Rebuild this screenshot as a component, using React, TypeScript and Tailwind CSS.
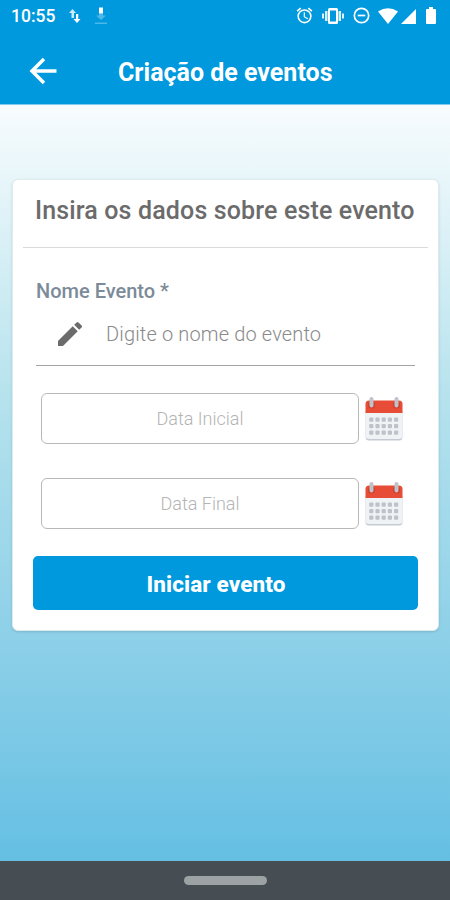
import React, { useState } from 'react';

const StatusBar: React.FC = () => (
    <div className="h-8 pl-[11px] pr-[14px] flex items-center justify-between text-white">
        <div className="flex items-center">
            <span className="w-[58px] text-[17.5px] font-medium leading-8">10:55</span>
            <svg className="w-3 h-4 mr-[14px]" viewBox="0 0 12 16" fill="currentColor">
                <path d="M3.500 1L7 5H5v5H2.500V5H0z" opacity="0.8" />
                <path d="M8 15l3.500-4H9.200V6H7v5H4.500z" />
            </svg>
            <svg className="w-3 h-[18px]" viewBox="0 0 12 18" fill="currentColor">
                <path d="M4 0.500h4v6H4z" />
                <path d="M4 6.500h4v2h3l-5 4.500-5-4.500h3z" opacity="0.3" />
                <path d="M0 15.500h12V17H0z" opacity="0.3" />
            </svg>
        </div>
        <div className="flex items-center">
            <svg className="size-[19px] mr-[8px] -mt-px" viewBox="0 0 24 24" fill="currentColor">
                <path d="M22 5.720l-4.600-3.860-1.290 1.530 4.600 3.860L22 5.720zM7.880 3.390L6.600 1.860 2 5.710l1.290 1.530 4.590-3.850zM12.500 8H11v6l4.750 2.850.75-1.230-4-2.370V8zM12 4a9 9 0 1 0 0 18 9 9 0 0 0 0-18zm0 16a7 7 0 1 1 0-14 7 7 0 0 1 0 14z" />
            </svg>
            <svg className="w-[22px] h-4 mr-[9px]" viewBox="0 0 22 16" fill="currentColor">
                <path d="M0 5.500h2v5H0zM3 3h2.500v10H3zM20 5.500h2v5h-2zM16.500 3H19v10h-2.500z" opacity="0.85" />
                <path d="M7.500 0h7Q16 0 16 1.500v13q0 1.500-1.500 1.500h-7Q6 16 6 14.500v-13Q6 0 7.500 0zM8 2.500v11h6v-11z" fillRule="evenodd" />
            </svg>
            <svg className="size-[17px] mr-[8px] -mt-px" viewBox="0 0 18 18" fill="none" stroke="currentColor" strokeWidth="1.800">
                <circle cx="9" cy="9" r="7.600" />
                <path d="M5 9h8" />
            </svg>
            <svg className="w-5 h-4 mr-[3px]" viewBox="0 0 20 16" fill="currentColor">
                <path d="M0 3.500Q10-3 20 3.500L10 16z" />
            </svg>
            <svg className="w-[15px] h-4 mr-[10px]" viewBox="0 0 15 16" fill="currentColor">
                <path d="M15 1v15H0z" />
            </svg>
            <svg className="w-[10px] h-[17px] -mt-px" viewBox="0 0 10 17" fill="currentColor">
                <path d="M3 0h4v2h2q1 0 1 1v13q0 1-1 1H1q-1 0-1-1V3q0-1 1-1h2z" />
            </svg>
        </div>
    </div>
);

const CalendarIcon: React.FC = () => (
    <svg className="w-[38px] h-11" viewBox="0 0 38 44">
        <path d="M0.500 14h37v26q0 3.500-3.500 3.500H4q-3.500 0-3.500-3.500z" fill="#c5cbd1" />
        <path d="M0.500 14h37v25q0 3-3.500 3H4q-3.500 0-3.500-3z" fill="#eff3f5" />
        <path d="M0.500 16V7q0-3.500 3.500-3.500h30q3.500 0 3.500 3.500v9z" fill="#e74c36" />
        <g fill="#cf3f2d">
            <circle cx="6.500" cy="8" r="3.500" />
            <circle cx="31.500" cy="8" r="3.500" />
        </g>
        <g fill="#bdc3c8">
            <rect x="4.500" y="0" width="4" height="10.500" rx="2" />
            <rect x="29.500" y="0" width="4" height="10.500" rx="2" />
        </g>
        {[20.5, 27, 33.5].map((y) =>
            [4.2, 10.4, 16.6, 22.8, 29].map((x) => (
                <rect key={`${x}-${y}`} x={x} y={y} width="4.200" height="4.200" rx="1" fill="#bdc3c9" />
            ))
        )}
    </svg>
);

interface DateFieldProps {
    label: string;
}

const DateField: React.FC<DateFieldProps> = ({ label }) => (
    <div className="flex items-center h-[51px]">
        <button className="w-[318px] h-[51px] mr-[6px] rounded-md border-[1.5px] border-[#b8b8b8] text-[18px] font-light text-[#b4b4b4]">
            {label}
        </button>
        <CalendarIcon />
    </div>
);

export default function App() {
    const [name, setName] = useState('');

    return (
        <div className="w-full h-[900px] flex flex-col font-['Roboto',sans-serif] bg-[#0099dd]">
            <StatusBar />
            <header className="h-[73px] flex items-center border-b border-[#7fcbed] text-white">
                <svg className="w-7 h-7 mt-[5px] ml-[29px] mr-[61px]" viewBox="0 0 28 28" fill="none" stroke="currentColor" strokeWidth="3.500">
                    <path d="M15 2L3 14l12 12M3 14h24.500" />
                </svg>
                <h1 className="text-[25px] font-bold leading-8 pt-[9px] whitespace-nowrap">Criação de eventos</h1>
            </header>

            <main className="flex-1 pl-3 pr-[11px] pt-[74px] bg-linear-to-b from-[#f8fcfe] from-0% via-[#b5e2ed] via-39% to-[#64bfe3] to-100%">
                <section className="h-[452px] px-[10px] flex flex-col rounded-md bg-white border border-[#dcebef] shadow-sm">
                    <h2 className="h-[68px] pl-[12px] border-b border-[#dadada] text-[25px] font-medium leading-[61px] tracking-[0.14px] text-[#6b6b6b] whitespace-nowrap">
                        Insira os dados sobre este evento
                    </h2>
                    <div className="mx-[13px] pt-[31px] h-[118px] flex flex-col border-b-[1.5px] border-[#a3a4a4]">
                        <label htmlFor="event-name" className="text-[20px] font-medium leading-6 text-[#7c8b99]">
                            Nome Evento *
                        </label>
                        <div className="flex items-center mt-[15px]">
                            <svg className="size-8 ml-[18px] mr-5" viewBox="0 0 24 24" fill="#6b6b6b">
                                <path d="M3 17.250V21h3.750L17.810 9.940l-3.750-3.750L3 17.250zM20.710 7.040a1 1 0 0 0 0-1.410l-2.340-2.340a1 1 0 0 0-1.410 0l-1.830 1.830 3.750 3.750 1.830-1.830z" />
                            </svg>
                            <input
                                id="event-name"
                                value={name}
                                onChange={(e) => setName(e.target.value)}
                                placeholder="Digite o nome do evento"
                                className="flex-1 min-w-0 h-8 text-[20px] font-light tracking-[0.15px] outline-none placeholder:text-[#8a8a8a]"
                            />
                        </div>
                    </div>
                    <div className="ml-[18px] mt-[27px] flex flex-col gap-[34px]">
                        <DateField label="Data Inicial" />
                        <DateField label="Data Final" />
                    </div>
                    <button className="ml-[10px] mr-[10px] mt-[27px] h-[54px] rounded-[5px] bg-[#0099dd] pt-[4px] pr-[19px] text-[22.500px] font-extrabold tracking-[0.1px] text-white">
                        Iniciar evento
                    </button>
                </section>
            </main>

            <footer className="h-[39px] flex items-center justify-center bg-[#464e54]">
                <div className="w-[83px] h-[9px] rounded-full bg-[#9da2a5]" />
            </footer>
        </div>
    );
}
